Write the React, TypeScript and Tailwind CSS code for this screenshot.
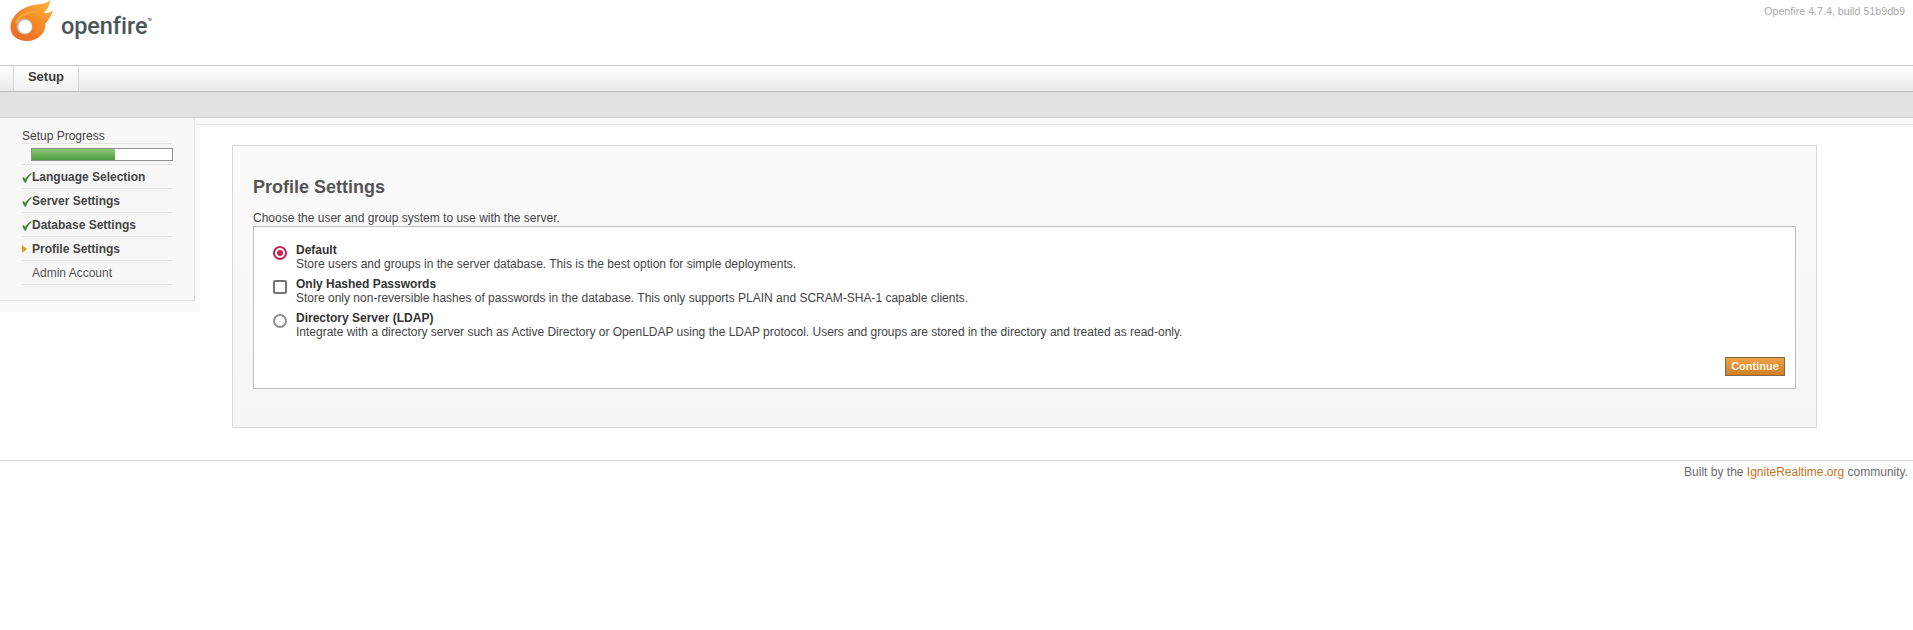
const steps = [
  { label: 'Language Selection', state: 'done' },
  { label: 'Server Settings', state: 'done' },
  { label: 'Database Settings', state: 'done' },
  { label: 'Profile Settings', state: 'current' },
  { label: 'Admin Account', state: 'todo' },
]

const options = [
  {
    type: 'radio-on',
    title: 'Default',
    text: 'Store users and groups in the server database. This is the best option for simple deployments.',
  },
  {
    type: 'check',
    title: 'Only Hashed Passwords',
    text: 'Store only non-reversible hashes of passwords in the database. This only supports PLAIN and SCRAM-SHA-1 capable clients.',
  },
  {
    type: 'radio',
    title: 'Directory Server (LDAP)',
    text: 'Integrate with a directory server such as Active Directory or OpenLDAP using the LDAP protocol. Users and groups are stored in the directory and treated as read-only.',
  },
]

const Logo = () => (
  <svg width="44" height="42" viewBox="0 0 44 42" className="block">
    <defs>
      <linearGradient id="flame" x1="0.9" y1="0" x2="0.2" y2="1">
        <stop offset="0" stopColor="#fcb540" />
        <stop offset="0.5" stopColor="#f68b26" />
        <stop offset="1" stopColor="#ee6824" />
      </linearGradient>
    </defs>
    <path
      d="M40 0C37 3 33 4 27 4.500C13 6 0.500 15 0.500 27.500C0.500 36 8 41 17 41C28 41 36 33 35.500 23.500C38 21 41.500 16 43 10C40 13 36.500 13.500 33.500 13C37 10 40 5 40 0Z"
      fill="url(#flame)"
    />
    <path d="M5 22C9 13 20 9 31 12C24 12 13 14 9 21C7 24 6 24 5 22Z" fill="#f9a63a" />
    <ellipse cx="14.500" cy="26.500" rx="8" ry="8" fill="#bdb8b0" />
    <ellipse cx="15.200" cy="26.800" rx="6.800" ry="6.800" fill="#ffffff" />
  </svg>
)

const Check = () => (
  <svg width="11" height="11" viewBox="0 0 11 11" className="block">
    <path d="M0.200 6L2 5L3.300 7C5 4 7.500 1.500 10.800 0.200C8 3 5.500 6.500 3.800 10.800L2.700 10.800Z" fill="#3f8a2f" />
  </svg>
)

const Arrow = () => (
  <svg width="5" height="8" viewBox="0 0 5 8" className="block">
    <path d="M0 0L5 4L0 8Z" fill="#d9a21b" />
  </svg>
)

const OptionControl = ({ type }: { type: string }) => {
  if (type === 'check') {
    return <span className="mt-[2px] block h-[14px] w-[14px] rounded-[2px] border-2 border-[#767676] bg-white" />
  }
  if (type === 'radio-on') {
    return (
      <span className="mt-[2px] flex h-[14px] w-[14px] items-center justify-center rounded-full border-2 border-[#c7254e] bg-white">
        <span className="block h-[6px] w-[6px] rounded-full bg-[#c7254e]" />
      </span>
    )
  }
  return <span className="mt-[2px] block h-[14px] w-[14px] rounded-full border-2 border-[#8f8f8f] bg-white" />
}

export default function App() {
  return (
    <div className="min-h-[630px] bg-white font-['Liberation_Sans',Arial,sans-serif] text-[12px] text-[#333]">
      <header className="flex h-[65px] items-start justify-between pl-[10px] pr-[8px]">
        <div className="flex items-start">
          <Logo />
          <div className="ml-[7px] mt-[9px] flex items-start font-['Roboto',sans-serif] text-[23.500px] font-medium leading-[34px] tracking-[-0.100px] text-[#4b5559]">
            openfire
            <span className="mt-[9px] text-[3px] leading-[4px]">TM</span>
          </div>
        </div>
        <div className="mt-[4px] text-[10.700px] leading-[14px] text-[#aaaaaa]">Openfire 4.7.4, build 51b9db9</div>
      </header>

      <nav className="flex h-[27px] border-y border-t-[#c8c8c8] border-b-[#bdbdbd] bg-gradient-to-b from-white to-[#e9e9e9] pl-[13px]">
        <div className="flex h-[25px] w-[66px] items-center justify-center border-x border-[#d8d8d8] bg-gradient-to-b from-white to-[#f0f0f0] pb-[3px] text-[13px] font-bold text-[#3a3a3a]">
          Setup
        </div>
      </nav>
      <div className="h-[26px] border-b border-[#cfcfcf] bg-[#e2e2e2]" />

      <div className="flex items-start">
        <div className="h-[194px] w-[200px] shrink-0 bg-[#fafafa]">
          <aside className="h-[183px] w-[195px] border-r border-b border-[#e3e3e3] bg-[#f7f7f7] pl-[22px] pr-[22px] pt-[11px] text-[#444]">
            <div className="h-[15px] border-b border-[#e3e3e3] leading-[14px]">Setup Progress</div>
            <div className="h-[21px] border-b border-[#e3e3e3] pl-[9px] pt-[4px]">
              <div className="-mr-[1px] h-[13px] border border-[#8f8f8f] bg-white">
                <div className="h-full w-[59%] bg-gradient-to-b from-[#8cc97a] to-[#4c9a3c]" />
              </div>
            </div>
            {steps.map((step) => (
              <div key={step.label} className="relative flex h-[24px] items-center border-b border-[#e3e3e3] pl-[10px]">
                {step.state === 'done' && (
                  <span className="absolute left-0 top-[7px]">
                    <Check />
                  </span>
                )}
                {step.state === 'current' && (
                  <span className="absolute left-0 top-[8px]">
                    <Arrow />
                  </span>
                )}
                <span className={step.state === 'todo' ? 'text-[#555]' : 'font-bold text-[#444]'}>{step.label}</span>
              </div>
            ))}
          </aside>
        </div>

        <main className="flex-1">
          <div className="-ml-[4px] h-[7px] border-b border-[#e8e8e8] bg-[#f9f9f9]" />
          <section className="ml-[32px] mt-[20px] h-[283px] w-[1585px] border border-[#d9d9d9] bg-gradient-to-b from-[#fbfbfb] to-[#f5f5f5] px-[20px] pt-[31px]">
            <h1 className="text-[18px] font-bold leading-[20px] text-[#555]">Profile Settings</h1>
            <p className="mt-[14px] h-[15px] leading-[15px] text-[#444]">Choose the user and group system to use with the server.</p>
            <div className="relative h-[163px] border border-[#bfbfbf] bg-white pl-[19px] pt-[16px]">
              {options.map((opt) => (
                <div key={opt.title} className="flex h-[34px] gap-[9px]">
                  <div className="w-[14px] shrink-0 pt-[1px]">
                    <OptionControl type={opt.type} />
                  </div>
                  <div className="leading-[14px]">
                    <div className="font-bold text-[#333]">{opt.title}</div>
                    <div className="text-[#444]">{opt.text}</div>
                  </div>
                </div>
              ))}
              <button className="absolute right-[10px] bottom-[12px] h-[19px] w-[60px] border border-[#7d6a4b] bg-gradient-to-b from-[#eda24a] to-[#d07f22] text-[11px] font-bold leading-[15px] text-[#fff6e4]">
                Continue
              </button>
            </div>
          </section>
        </main>
      </div>

      <footer className="mt-[32px] border-t border-[#dcdcdc] pr-[5px] pt-[4px] text-right leading-[15px] text-[#6b6b6b]">
        Built by the <span className="text-[#c8731f]">IgniteRealtime.org</span> community.
      </footer>
    </div>
  )
}
